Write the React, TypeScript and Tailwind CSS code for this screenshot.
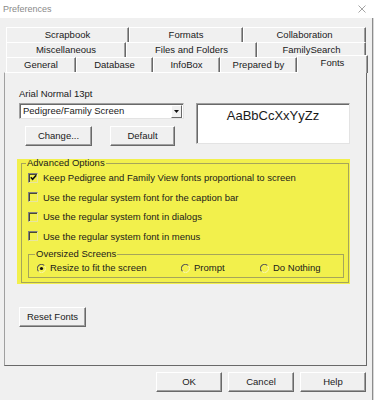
import React from "react"

const font = { fontFamily: '"Liberation Sans", Arial, sans-serif' }

function Tab({ label, w, selected = false }: { label: string; w: number; selected?: boolean }) {
  if (selected) {
    return (
      <div
        className="relative z-10 -mt-[2px] -mb-[1px] flex h-[18px] items-start justify-center border-l border-t border-white border-r border-r-[#696969] bg-[#f0f0f0] pt-[2px] shadow-[inset_-1px_0_0_#a0a0a0]"
        style={{ width: w }}
      >
        {label}
      </div>
    )
  }
  return (
    <div
      className="flex h-[15px] items-center justify-center border-l border-t border-white border-r border-r-[#696969] shadow-[inset_-1px_0_0_#a0a0a0]"
      style={{ width: w }}
    >
      {label}
    </div>
  )
}

function Button({ label, className = "" }: { label: string; className?: string }) {
  return (
    <div
      className={
        "flex h-[20px] items-center justify-center border border-t-white border-l-white border-b-[#696969] border-r-[#696969] bg-[#f0f0f0] shadow-[inset_-1px_-1px_0_#a0a0a0] " +
        className
      }
    >
      {label}
    </div>
  )
}

function Check({ checked, label }: { checked?: boolean; label: string }) {
  return (
    <div className="flex h-[19.5px] items-center">
      <div className="ml-[6px] flex h-[10px] w-[10px] items-center justify-center border border-t-[#808080] border-l-[#808080] border-b-[#e8e6a0] border-r-[#e8e6a0] shadow-[inset_1px_1px_0_#4a4a30]">
        {checked && (
          <svg width="7" height="7" viewBox="0 0 7 7">
            <path d="M0.8 3.3 L2.6 5.2 L6.2 1.2" stroke="#111" strokeWidth="1.6" fill="none" />
          </svg>
        )}
      </div>
      <span className="ml-[5px]">{label}</span>
    </div>
  )
}

function Radio({ on, label, className = "" }: { on?: boolean; label: string; className?: string }) {
  return (
    <div className={"flex items-center " + className}>
      <svg width="9" height="9" viewBox="0 0 9 9">
        <path d="M7.4 1.6 A4 4 0 0 0 1.6 7.4" stroke="#555" strokeWidth="1.1" fill="none" />
        <path d="M1.6 7.4 A4 4 0 0 0 7.4 1.6" stroke="#f8f6b0" strokeWidth="1" fill="none" />
        {on && <circle cx="4.5" cy="4.5" r="1.6" fill="#111" />}
      </svg>
      <span className="ml-[4px]">{label}</span>
    </div>
  )
}

export default function App() {
  return (
    <div className="h-[400px] w-[374px] overflow-hidden bg-[#f0f0f0] text-[9.5px] leading-none text-[#1a1a1a]" style={font}>
      {/* title bar */}
      <div className="flex h-[18px] items-center justify-between bg-white pl-[3px] pr-[8px]">
        <span className="text-[9px] text-[#8a8a8a]">Preferences</span>
        <svg width="8" height="8" viewBox="0 0 8 8">
          <path d="M0.5 0.5 L7.5 7.5 M7.5 0.5 L0.5 7.5" stroke="#9a9a9a" strokeWidth="0.9" />
        </svg>
      </div>

      <div className="flex h-[382px]">
        <div className="w-[372px]">
          {/* tab rows */}
          <div className="mt-[9px] flex flex-col pl-[6px]">
            <div className="flex">
              <Tab label="Scrapbook" w={123} />
              <Tab label="Formats" w={114} />
              <Tab label="Collaboration" w={123} />
            </div>
            <div className="flex">
              <Tab label="Miscellaneous" w={120} />
              <Tab label="Files and Folders" w={131} />
              <Tab label="FamilySearch" w={109} />
            </div>
            <div className="flex">
              <Tab label="General" w={70} />
              <Tab label="Database" w={77} />
              <Tab label="InfoBox" w={67} />
              <Tab label="Prepared by" w={77} />
              <Tab label="Fonts" w={71} selected />
            </div>
          </div>

          {/* panel */}
          <div className="ml-[4px] flex h-[294px] w-[363px] flex-col border border-t-white border-l-[#a0a0a0] border-b-[#696969] border-r-[#696969] pl-[14px]">
            <div className="mt-[16px] h-[12px]">Arial Normal 13pt</div>

            <div className="mt-[2px] flex">
              <div className="flex w-[165px] flex-col">
                <div className="flex h-[16px] items-center border border-t-[#a0a0a0] border-l-[#a0a0a0] border-b-[#e3e3e3] border-r-[#e3e3e3] bg-white pl-[3px] shadow-[inset_1px_1px_0_#696969]">
                  <span className="flex-1">Pedigree/Family Screen</span>
                  <div className="mr-[1px] flex h-[13px] w-[11px] items-center justify-center border border-t-white border-l-white border-b-[#696969] border-r-[#696969] bg-[#f0f0f0]">
                    <svg width="5" height="3" viewBox="0 0 5 3">
                      <path d="M0 0 L5 0 L2.5 3 Z" fill="#111" />
                    </svg>
                  </div>
                </div>
                <div className="mt-[7px] flex gap-[18px] pl-[6px]">
                  <Button label="Change..." className="w-[67px]" />
                  <Button label="Default" className="w-[65px]" />
                </div>
              </div>
              <div className="ml-[12px] flex h-[41px] w-[154px] justify-center border border-t-[#a0a0a0] border-l-[#a0a0a0] border-b-[#e3e3e3] border-r-[#e3e3e3] bg-white pt-[5px] text-[13px] shadow-[inset_1px_1px_0_#696969]">
                AaBbCcXxYyZz
              </div>
            </div>

            {/* highlighted advanced options */}
            <div className="-ml-[2px] mt-[13px] h-[125px] w-[333px] bg-[#f2f04c] pl-[4px] pr-[1px]">
              <fieldset className="h-[124px] border border-[#a6a55a] px-0">
                <legend className="ml-[4px] px-[1px] leading-[8px]">Advanced Options</legend>
                <div className="mt-[1px]">
                  <Check checked label="Keep Pedigree and Family View fonts proportional to screen" />
                  <Check label="Use the regular system font for the caption bar" />
                  <Check label="Use the regular system font in dialogs" />
                  <Check label="Use the regular system font in menus" />
                </div>
                <fieldset className="ml-[6px] mt-[4px] h-[28px] w-[316px] border border-[#a6a55a]">
                  <legend className="ml-[6px] px-[1px] leading-[8px]">Oversized Screens</legend>
                  <div className="mt-[4px] flex h-[12px] items-center">
                    <Radio on label="Resize to fit the screen" className="ml-[8px] w-[144px]" />
                    <Radio label="Prompt" className="w-[79px]" />
                    <Radio label="Do Nothing" />
                  </div>
                </fieldset>
              </fieldset>
            </div>

            <Button label="Reset Fonts" className="mt-[23px] w-[67px]" />
          </div>

          {/* dialog buttons */}
          <div className="mt-[6px] flex gap-[6px] pl-[156px]">
            <Button label="OK" className="w-[66px]" />
            <Button label="Cancel" className="w-[66px]" />
            <Button label="Help" className="w-[66px]" />
          </div>
        </div>
        <div className="w-[1px] bg-[#8c8c8c]" />
        <div className="w-[1px] bg-[#d8d8d8]" />
      </div>
    </div>
  )
}
